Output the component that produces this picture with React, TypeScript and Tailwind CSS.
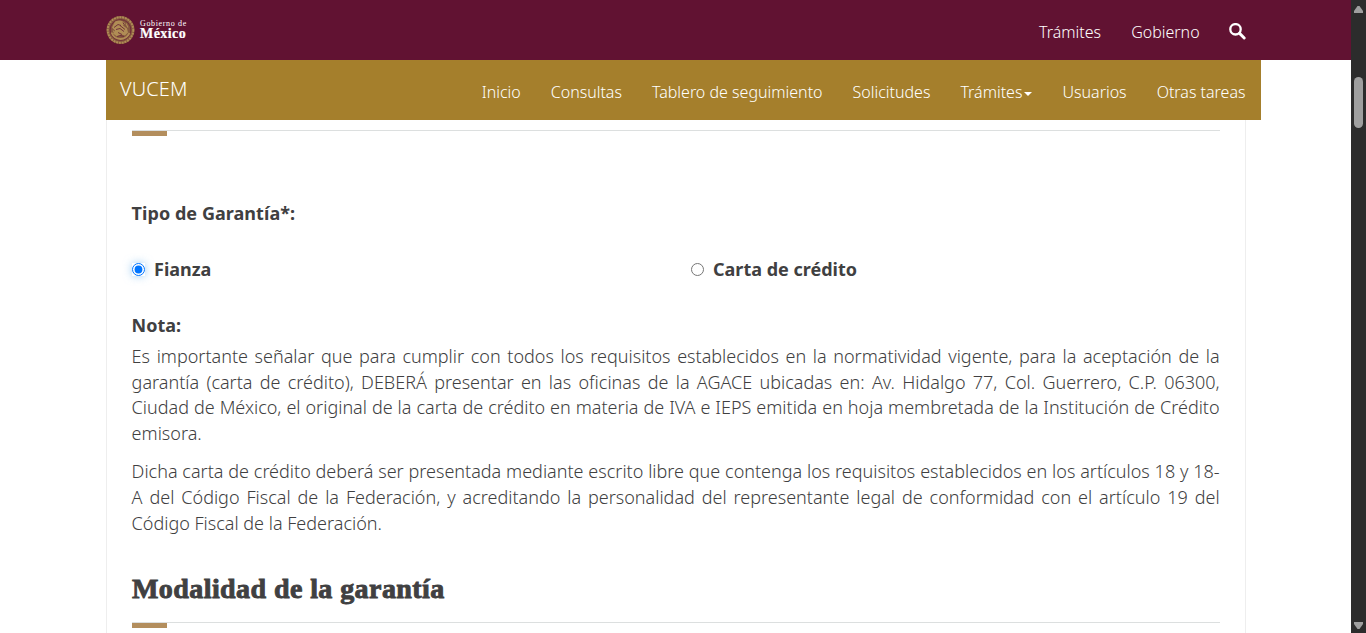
const nav = "text-white text-[16px] leading-5 font-light whitespace-nowrap";
const lines1 = [
  "Es importante señalar que para cumplir con todos los requisitos establecidos en la normatividad vigente, para la aceptación de la",
  "garantía (carta de crédito), DEBERÁ presentar en las oficinas de la AGACE ubicadas en: Av. Hidalgo 77, Col. Guerrero, C.P. 06300,",
  "Ciudad de México, el original de la carta de crédito en materia de IVA e IEPS emitida en hoja membretada de la Institución de Crédito",
  "emisora.",
];
const lines2 = [
  "Dicha carta de crédito deberá ser presentada mediante escrito libre que contenga los requisitos establecidos en los artículos 18 y 18-",
  "A del Código Fiscal de la Federación, y acreditando la personalidad del representante legal de conformidad con el artículo 19 del",
  "Código Fiscal de la Federación.",
];

function Para({ lines }: { lines: string[] }) {
  return (
    <div className="-ml-[0.4px] mr-[0.4px] text-[18px] leading-[25.72px] font-light">
      {lines.map((l, i) => (
        <div key={i} className={i < lines.length - 1 ? "whitespace-nowrap [text-align-last:justify]" : ""}>
          {l}
        </div>
      ))}
    </div>
  );
}

function Rule() {
  return (
    <div className="h-1.5 border-t border-[#dcdfdf]">
      <div className="h-[5px] w-[35px] bg-[#b38e5d]" />
    </div>
  );
}

function Crest() {
  return (
    <svg width="29" height="30" viewBox="0 0 29 29" fill="none" stroke="#b08d55">
      <circle cx="14.5" cy="14.5" r="14" fill="#85573f" stroke="none" />
      <circle cx="14.5" cy="14.5" r="12.8" strokeWidth="2" strokeDasharray="2 .8" />
      <circle cx="14.5" cy="14.5" r="10.4" stroke="#702b38" strokeWidth="1" />
      <path d="M9 6c4-2 8-1 10 2l-2 2 4 3 1 4-3 3-4-1-4 2-4-3 2-3-3-3z" fill="#b08d55" stroke="none" />
      <path d="M5.5 17c2 5 5 6.5 9 6.5s7-2 9-6" strokeWidth="1.8" />
      <path d="M7 15l3 4 4 1M20 8l2 4" strokeWidth="1.2" />
      <path d="M8 12l4-3 3 1M10 14l4-1 4 3M14 10l5 4M12 17l4 2M17 7l1 2M11 21l3-1 4 1" stroke="#6b2939" strokeWidth=".9" />
    </svg>
  );
}

export default function App() {
  return (
    <div className="flex h-[633px] w-[1366px] overflow-hidden bg-white font-['Noto_Sans',sans-serif] text-[#404041]">
      <div className="flex w-[1351px] flex-col">
        <header className="flex h-[60px] shrink-0 bg-[#611232] pl-[106px] pr-[105px]">
          <div className="flex items-center gap-[5px] pb-px">
            <Crest />
            <div className="font-['Liberation_Serif',serif] text-white">
              <div className="text-[8px] leading-2 font-normal tracking-[0.65px]">Gobierno de</div>
              <div className="text-[14px] leading-[11px] font-bold tracking-[0.45px] [-webkit-text-stroke:0.2px_white]">México</div>
            </div>
          </div>
          <nav className="ml-auto flex gap-[30px] pt-[22px]">
            <a className={nav}>Trámites</a>
            <a className={nav}>Gobierno</a>
            <svg className="mt-px -ml-[0.6px]" width="17" height="17" viewBox="0 0 17 17" fill="none" stroke="white">
              <circle cx="6.5" cy="6.3" r="5.2" strokeWidth="2.3" />
              <path d="M10.6 10.4l4.6 4.6" strokeWidth="2.9" strokeLinecap="round" />
            </svg>
          </nav>
        </header>
        <div className="ml-[106px] flex h-[60px] w-[1155px] shrink-0 bg-[#a57f2c] pl-3.5 pr-[15.5px]">
          <div className="pt-[17px] text-[20px] leading-6 font-light tracking-[0.1px] text-white">VUCEM</div>
          <nav className="ml-auto flex items-start gap-[30px] pt-[22px]">
            <a className={nav}>Inicio</a>
            <a className={nav}>Consultas</a>
            <a className={nav}>Tablero de seguimiento</a>
            <a className={nav}>Solicitudes</a>
            <a className={nav + " flex items-center gap-0.5"}>
              Trámites
              <svg className="mt-[3px]" width="8" height="4" viewBox="0 0 8 4" fill="white"><path d="M0 0h8l-4 4z" /></svg>
            </a>
            <a className={nav}>Usuarios</a>
            <a className={nav}>Otras tareas</a>
          </nav>
        </div>
        <main className="ml-[106px] flex w-[1140px] grow flex-col border-x border-[#eee] px-[25px] pt-2.5">
          <Rule />
          <div className="-ml-[0.4px] mt-[64px] text-[18px] leading-[26px] font-bold tracking-[0.05px]">Tipo de Garantía*:</div>
          <div className="mt-[30px] flex text-[18px] leading-[26px] font-bold">
            <label className="flex w-[559px] items-center gap-[9px]">
              <input type="radio" name="g" defaultChecked className="m-0 size-[13px] rounded-full shadow-[0_0_8px_rgba(102,175,233,0.6)]" />
              Fianza
            </label>
            <label className="flex items-center gap-[9px]">
              <input type="radio" name="g" className="m-0 size-[13px]" />
              Carta de crédito
            </label>
          </div>
          <div className="-ml-[0.4px] mb-[5.8px] mt-[30px] text-[18px] leading-[26px] font-bold">Nota:</div>
          <Para lines={lines1} />
          <div className="h-[12.4px]" />
          <Para lines={lines2} />
          <h3 className="mb-[17.5px] mt-[36.5px] font-['Liberation_Serif',serif] text-[28px] leading-8 font-bold tracking-[0.42px] [-webkit-text-stroke:0.9px_#404041]">Modalidad de la garantía</h3>
          <Rule />
        </main>
      </div>
      <div className="flex w-[15px] flex-col items-center justify-between bg-[#2c2c2c] py-1.5">
        <svg width="9" height="7" viewBox="0 0 9 7" fill="#9f9f9f"><path d="M3.5 0h2L9 5v2H0V5z" /></svg>
        <div className="mb-auto mt-[64px] h-[51px] w-[9px] rounded-full bg-[#9f9f9f]" />
        <svg className="-mb-0.5" width="9" height="7" viewBox="0 0 9 7" fill="#9f9f9f"><path d="M0 0h9v2L5.5 7h-2L0 2z" /></svg>
      </div>
    </div>
  );
}
